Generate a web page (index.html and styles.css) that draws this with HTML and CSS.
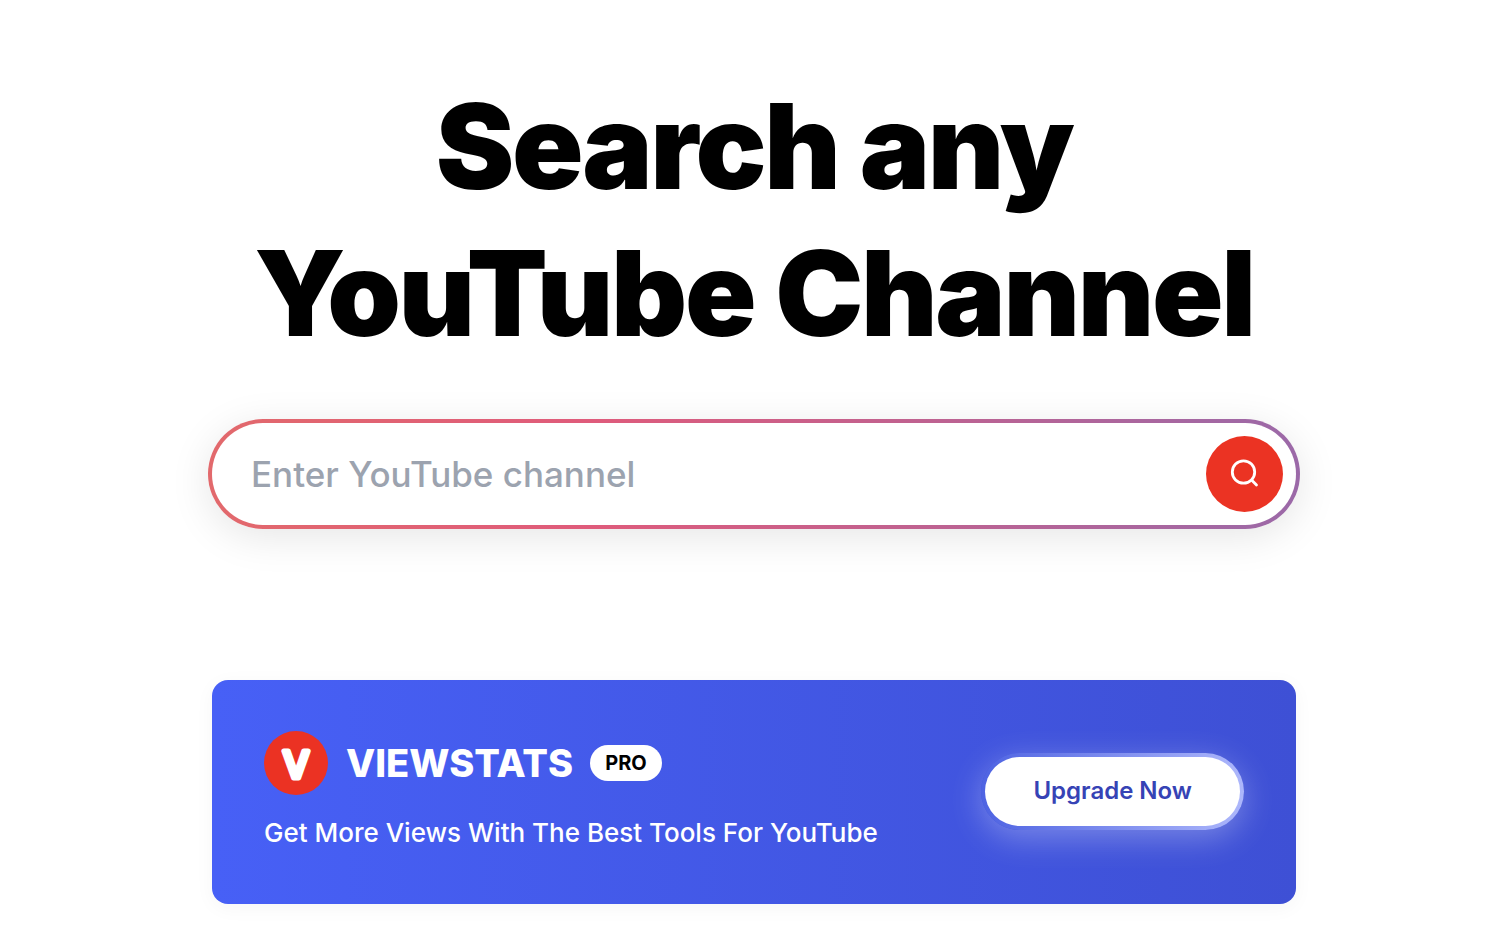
FILE: index.html
```html
<!DOCTYPE html>
<html lang="en">
<head>
    <meta charset="UTF-8">
    <meta name="viewport" content="width=device-width, initial-scale=1.0">
    <title>ViewStats</title>
    <link rel="stylesheet" href="styles.css">
</head>
<body>
    <main class="page">
        <h1 class="title">Search any<br>YouTube Channel</h1>

        <form class="search">
            <input class="search-input" type="text" placeholder="Enter YouTube channel" aria-label="Enter YouTube channel">
            <button class="search-button" type="submit" aria-label="Search">
                <svg width="32" height="32" viewBox="0 0 32 32" fill="none" stroke="#fff" stroke-width="2.8" stroke-linecap="round" stroke-linejoin="round">
                    <circle cx="14.5" cy="14" r="11.2"/>
                    <path d="M22.8 22.2L27.5 27"/>
                </svg>
            </button>
        </form>

        <section class="banner">
            <div class="banner-info">
                <div class="brand">
                    <svg class="brand-logo" width="64" height="64" viewBox="0 0 64 64" aria-hidden="true">
                        <circle cx="32" cy="32" r="32" fill="#eb3223"/>
                        <text class="brand-letter" x="32" y="47" text-anchor="middle">V</text>
                    </svg>
                    <span class="brand-name">VIEWSTATS</span>
                    <span class="badge">PRO</span>
                </div>
                <p class="tagline">Get More Views With The Best Tools For YouTube</p>
            </div>
            <button class="upgrade" type="button"><span class="upgrade-label">Upgrade Now</span></button>
        </section>
    </main>
</body>
</html>
```
FILE: styles.css
```css
* {
    box-sizing: border-box;
}
body {
    margin: 0;
    background-color: #fff;
    font-family: Inter, sans-serif;
}
.page {
    padding: 73px 200px 40px 212px;
}
.title {
    margin: 0 0 52px;
    font-size: 118px;
    font-weight: 900;
    line-height: 147px;
    letter-spacing: -0.02em;
    text-align: center;
    color: #000;
}
.search {
    display: flex;
    align-items: center;
    height: 110px;
    margin: 0 -4px;
    padding: 0 13px 0 39px;
    border: 4px solid transparent;
    border-radius: 55px;
    background: linear-gradient(#fff, #fff) padding-box,
        linear-gradient(to right, #e2696c, #df5b7b 35%, #9b69a8) border-box;
    box-shadow: 0 8px 40px rgba(0, 0, 0, 0.1);
}
.search-input {
    flex: 1;
    min-width: 0;
    padding: 0;
    border: none;
    outline: none;
    background: none;
    font-family: inherit;
    font-size: 35px;
    font-weight: 500;
    color: #111827;
}
.search-input::placeholder {
    color: #9ca3af;
    opacity: 1;
}
.search-button {
    display: flex;
    align-items: center;
    justify-content: center;
    width: 77px;
    height: 76px;
    padding: 0;
    border: none;
    border-radius: 50%;
    background-color: #eb3323;
    cursor: pointer;
}
.banner {
    display: flex;
    align-items: center;
    justify-content: space-between;
    margin-top: 151px;
    padding: 51px 52px 53px;
    border-radius: 16px;
    background: linear-gradient(to right, #4760f6, #3e50d5);
    box-shadow: 0 4px 20px rgba(0, 0, 0, 0.04);
}
.brand {
    display: flex;
    align-items: center;
}
.brand-letter {
    font-size: 37px;
    font-weight: 500;
    fill: #fff;
    stroke: #fff;
    stroke-width: 5;
    stroke-linejoin: round;
}
.brand-name {
    margin-left: 18px;
    font-size: 38px;
    font-weight: 800;
    line-height: 48px;
    color: #fff;
}
.badge {
    margin-left: 17px;
    padding: 0 15px;
    border-radius: 18px;
    background-color: #fff;
    font-size: 20px;
    font-weight: 700;
    line-height: 36px;
    color: #000;
}
.tagline {
    margin: 20px 0 0;
    font-size: 26px;
    font-weight: 500;
    line-height: 36px;
    color: #fff;
}
.upgrade {
    padding: 4px;
    border: none;
    border-radius: 39px;
    background: linear-gradient(to right, #4e63e2, #adb7fb);
    box-shadow: 0 8px 32px rgba(255, 255, 255, 0.3);
    font-family: inherit;
    cursor: pointer;
}
.upgrade-label {
    display: block;
    padding: 0 48px 2px;
    border-radius: 35px;
    background-color: #fff;
    font-size: 24px;
    font-weight: 600;
    line-height: 67px;
    color: #3643b5;
}
```
